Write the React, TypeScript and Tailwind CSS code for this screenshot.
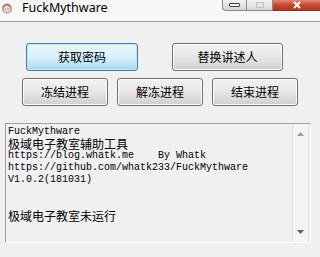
import { ReactNode } from 'react'

const cjk = '"Noto Sans CJK SC", "Noto Sans", sans-serif'
const mono = '"Liberation Mono", "Noto Sans CJK SC", monospace'

function WinButton({ children, width, primary }: { children: ReactNode; width: string; primary?: boolean }) {
  return (
    <button
      className={
        'h-[28px] rounded-[3px] border text-[12px] text-black flex items-center justify-center ' +
        width +
        (primary
          ? ' border-[#3c7fb1] bg-gradient-to-b from-[#eaf6fd] via-[#d9f0fc] to-[#a7d9f5] shadow-[inset_0_0_0_1px_#c4e5f6]'
          : ' border-[#707070] bg-gradient-to-b from-[#f2f2f2] via-[#e6e6e6] to-[#cfcfcf] shadow-[inset_0_0_0_1px_#fbfbfb]')
      }
      style={{ fontFamily: cjk }}
    >
      {children}
    </button>
  )
}

function AppIcon() {
  return (
    <svg width="12" height="12" viewBox="0 0 12 12">
      <circle cx="6" cy="6.5" r="5" fill="#c98f8c" />
      <circle cx="6" cy="7" r="3.2" fill="#f4dcd6" />
      <path d="M1.5 5 Q6 0 10.5 5 L9 4.5 L6 3 L3 4.5 Z" fill="#8e5b58" />
      <circle cx="4.8" cy="7" r="0.6" fill="#6b3a3a" />
      <circle cx="7.2" cy="7" r="0.6" fill="#6b3a3a" />
    </svg>
  )
}

function Line({ children, cn }: { children?: ReactNode; cn?: boolean }) {
  return (
    <div
      className={'h-[12px] leading-[12px] overflow-visible ' + (cn ? 'text-[12px]' : 'text-[10px]')}
      style={{ fontFamily: cn ? cjk : mono }}
    >
      {children}
    </div>
  )
}

export default function App() {
  return (
    <div className="w-[320px] h-[257px] bg-[#f0f0f0] overflow-hidden flex flex-col" style={{ fontFamily: '"Noto Sans", sans-serif' }}>
      {/* Title bar */}
      <div className="h-[22px] shrink-0 bg-[#f7f7f7] border-b border-[#9d9d9d] flex items-start relative">
        <div className="ml-[1px] mt-[2px]">
          <AppIcon />
        </div>
        <span className="ml-[9px] text-[12.5px] leading-[17px] -mt-[1px] text-black">FuckMythware</span>

        {/* Window controls */}
        <div className="absolute right-0 top-0 flex h-[11px]">
          <div className="w-[25px] h-full rounded-bl-[4px] border border-t-0 border-[#8b8b8b] bg-gradient-to-b from-[#f2f2f2] to-[#d3d3d3] flex items-center justify-center">
            <div className="w-[11px] h-[4px] rounded-[1px] border border-[#4a4a4a] bg-white" />
          </div>
          <div className="w-[26px] h-full border-b border-r border-[#8b8b8b] bg-gradient-to-b from-[#f2f2f2] to-[#d6d6d6] flex items-center justify-center">
            <div className="w-[8px] h-[6px] border border-[#c0c0c0]" />
          </div>
          <div className="w-[47px] h-full border-b border-[#8c2f22] bg-gradient-to-b from-[#e08a78] via-[#c9462c] to-[#b23a22] flex items-center justify-center">
            <svg width="10" height="8" viewBox="0 0 10 8">
              <path d="M2 1 L8 7 M8 1 L2 7" stroke="#ffffff" strokeWidth="2" />
            </svg>
          </div>
        </div>
      </div>

      {/* Buttons */}
      <div className="flex gap-[34px] pl-[26px] mt-[21px]">
        <WinButton width="w-[112px]" primary>获取密码</WinButton>
        <WinButton width="w-[111px]">替换讲述人</WinButton>
      </div>
      <div className="flex gap-[9px] pl-[22px] mt-[7px]">
        <WinButton width="w-[86px]">冻结进程</WinButton>
        <WinButton width="w-[86px]">解冻进程</WinButton>
        <WinButton width="w-[86px]">结束进程</WinButton>
      </div>

      {/* Output box */}
      <div className="ml-[5px] mt-[17px] w-[306px] h-[120px] border border-t-[#a0a0a0] border-l-[#a0a0a0] border-b-white border-r-white flex">
        <div className="flex-1 pl-[2px] pt-[2px] text-black whitespace-pre">
          <Line>FuckMythware</Line>
          <Line cn>极域电子教室辅助工具</Line>
          <Line>https://blog.whatk.me    By Whatk</Line>
          <Line>https://github.com/whatk233/FuckMythware</Line>
          <Line>V1.0.2(181031)</Line>
          <Line />
          <Line />
          <Line cn>极域电子教室未运行</Line>
        </div>
        <div className="w-[17px] h-full mr-[1px] border-l border-r border-[#e2e2e2] bg-[#f4f4f4] flex flex-col items-center justify-between py-[8px]">
          <svg width="7" height="4" viewBox="0 0 7 4"><path d="M0 4 L3.5 0 L7 4 Z" fill="#9a9a9a" /></svg>
          <svg width="7" height="4" viewBox="0 0 7 4"><path d="M0 0 L3.5 4 L7 0 Z" fill="#606060" /></svg>
        </div>
      </div>
    </div>
  )
}
